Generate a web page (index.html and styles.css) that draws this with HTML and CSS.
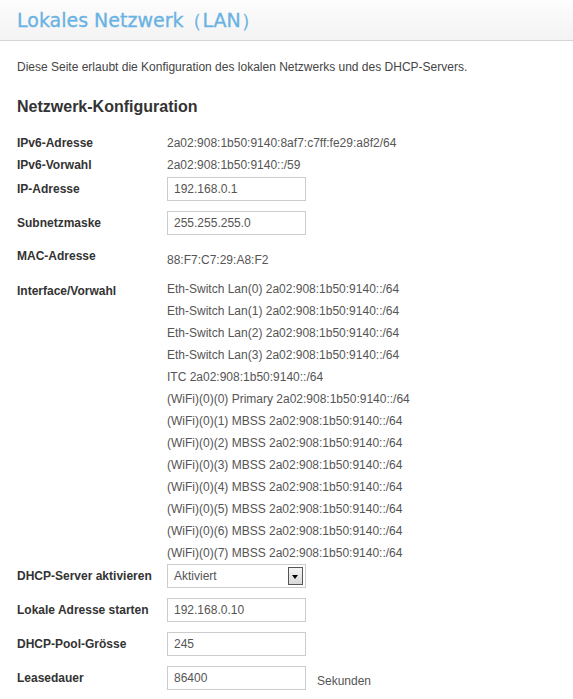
FILE: index.html
```html
<!DOCTYPE html>
<html lang="de">
<head>
    <meta charset="UTF-8">
    <title>Lokales Netzwerk (LAN)</title>
    <link rel="stylesheet" href="styles.css">
</head>
<body>
    <div class="page-head">
        <h1>Lokales Netzwerk（LAN）</h1>
    </div>

    <div class="content">
        <p class="intro">Diese Seite erlaubt die Konfiguration des lokalen Netzwerks und des DHCP-Servers.</p>

        <h2>Netzwerk-Konfiguration</h2>

        <div class="form">
            <div class="row">
                <label>IPv6-Adresse</label>
                <div class="val">2a02:908:1b50:9140:8af7:c7ff:fe29:a8f2/64</div>
            </div>
            <div class="row">
                <label>IPv6-Vorwahl</label>
                <div class="val">2a02:908:1b50:9140::/59</div>
            </div>
            <div class="row field">
                <label>IP-Adresse</label>
                <input type="text" value="192.168.0.1">
            </div>
            <div class="row field">
                <label>Subnetzmaske</label>
                <input type="text" value="255.255.255.0">
            </div>
            <div class="row mac">
                <label>MAC-Adresse</label>
                <div class="val">88:F7:C7:29:A8:F2</div>
            </div>
            <div class="row iface">
                <label>Interface/Vorwahl</label>
                <div class="val list">
                    <div>Eth-Switch Lan(0) 2a02:908:1b50:9140::/64</div>
                    <div>Eth-Switch Lan(1) 2a02:908:1b50:9140::/64</div>
                    <div>Eth-Switch Lan(2) 2a02:908:1b50:9140::/64</div>
                    <div>Eth-Switch Lan(3) 2a02:908:1b50:9140::/64</div>
                    <div>ITC 2a02:908:1b50:9140::/64</div>
                    <div>(WiFi)(0)(0) Primary 2a02:908:1b50:9140::/64</div>
                    <div>(WiFi)(0)(1) MBSS 2a02:908:1b50:9140::/64</div>
                    <div>(WiFi)(0)(2) MBSS 2a02:908:1b50:9140::/64</div>
                    <div>(WiFi)(0)(3) MBSS 2a02:908:1b50:9140::/64</div>
                    <div>(WiFi)(0)(4) MBSS 2a02:908:1b50:9140::/64</div>
                    <div>(WiFi)(0)(5) MBSS 2a02:908:1b50:9140::/64</div>
                    <div>(WiFi)(0)(6) MBSS 2a02:908:1b50:9140::/64</div>
                    <div>(WiFi)(0)(7) MBSS 2a02:908:1b50:9140::/64</div>
                </div>
            </div>
            <div class="row field first">
                <label>DHCP-Server aktivieren</label>
                <div class="select">
                    <span>Aktiviert</span>
                    <span class="arrow"></span>
                </div>
            </div>
            <div class="row field">
                <label>Lokale Adresse starten</label>
                <input type="text" value="192.168.0.10">
            </div>
            <div class="row field">
                <label>DHCP-Pool-Grösse</label>
                <input type="text" value="245">
            </div>
            <div class="row field">
                <label>Leasedauer</label>
                <input type="text" value="86400">
                <span class="unit">Sekunden</span>
            </div>
        </div>
    </div>
</body>
</html>
```

FILE: styles.css
```css
body {
    margin: 0;
    font-family: "Liberation Sans", Arial, sans-serif;
    font-size: 12px;
    color: #444;
    background: #fff;
}

.page-head {
    height: 40px;
    background: linear-gradient(to bottom, #fdfdfd 0%, #f3f3f3 100%);
    border-bottom: 1px solid #d4d4d4;
    padding-left: 17px;
}

.page-head h1 {
    margin: 0;
    font-family: "DejaVu Sans", Verdana, sans-serif;
    font-weight: normal;
    font-size: 19px;
    line-height: 40px;
    color: #69b2e3;
    -webkit-text-stroke: 0.3px #69b2e3;
}

.content {
    padding: 0 17px;
}

.intro {
    margin: 18px 0 0;
    line-height: 16px;
    color: #444;
}

h2 {
    margin: 22px 0 0;
    font-size: 16px;
    line-height: 20px;
    font-weight: bold;
    color: #333;
}

.form {
    margin-top: 15px;
}

.row {
    display: flex;
    align-items: flex-start;
}

.row label {
    width: 150px;
    flex-shrink: 0;
    font-weight: bold;
    color: #333;
    line-height: 22px;
}

.val {
    line-height: 22px;
    color: #555;
}

.row.field {
    align-items: center;
    height: 24px;
    margin-top: 10px;
}

.row.field:nth-child(3) {
    margin-top: 1px;
}

.row.field.first {
    margin-top: 0;
}

.row.field input,
.select {
    box-sizing: border-box;
    width: 139px;
    height: 24px;
    border: 1px solid #ccc;
    padding: 0 6px;
    font-family: inherit;
    font-size: 12px;
    color: #555;
    background: #fff;
    margin: 0;
}

.select {
    display: flex;
    align-items: center;
    justify-content: space-between;
    padding-right: 2px;
}

.select .arrow {
    position: relative;
    width: 15px;
    height: 18px;
    box-sizing: border-box;
    border: 1px solid #555;
    background: linear-gradient(to bottom, #f4f4f4, #d8d8d8);
}

/* small triangle inside the drop-down button */
.select .arrow::after {
    content: "";
    position: absolute;
    left: 3px;
    top: 7px;
    border-left: 3.5px solid transparent;
    border-right: 3.5px solid transparent;
    border-top: 4px solid #000;
}

.unit {
    margin-left: 11px;
    margin-top: 6px;
    color: #555;
}

.row.mac {
    margin-top: 10px;
}

.row.mac .val {
    padding-top: 4px;
}

.row.iface {
    margin-top: 7px;
}

.row.iface label {
    padding-top: 2px;
}
```
